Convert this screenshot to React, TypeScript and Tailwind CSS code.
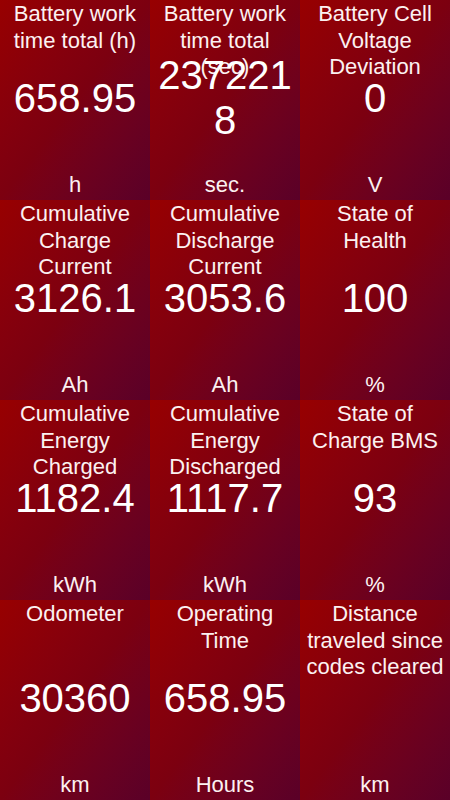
type Metric = {
  title: string;
  value: string;
  unit: string;
};

const metrics: Metric[] = [
  { title: "Battery work time total (h)", value: "658.95", unit: "h" },
  { title: "Battery work time total (sec)", value: "2372218", unit: "sec." },
  { title: "Battery Cell Voltage Deviation", value: "0", unit: "V" },
  { title: "Cumulative Charge Current", value: "3126.1", unit: "Ah" },
  { title: "Cumulative Discharge Current", value: "3053.6", unit: "Ah" },
  { title: "State of Health", value: "100", unit: "%" },
  { title: "Cumulative Energy Charged", value: "1182.4", unit: "kWh" },
  { title: "Cumulative Energy Discharged", value: "1117.7", unit: "kWh" },
  { title: "State of Charge BMS", value: "93", unit: "%" },
  { title: "Odometer", value: "30360", unit: "km" },
  { title: "Operating Time", value: "658.95", unit: "Hours" },
  { title: "Distance traveled since codes cleared", value: "", unit: "km" },
];

const Tile: React.FC<Metric> = ({ title, value, unit }) => {
  return (
    <div className="grid h-[200px] overflow-hidden bg-gradient-to-br from-[#980000] via-[#7c0010] to-[#5a0028] px-[6px] text-center text-[#fcf1f1]">
      <div className="col-start-1 row-start-1 self-start pt-[1px] text-[22px] leading-[26.5px]">
        {title}
      </div>
      <div className="col-start-1 row-start-1 self-center break-all pb-[4px] text-[40px] leading-[45px] text-white">
        {value}
      </div>
      <div className="col-start-1 row-start-1 self-end pb-[2px] text-[22px] leading-[26.5px]">
        {unit}
      </div>
    </div>
  );
};

export default function App() {
  return (
    <div className="grid h-[800px] w-[450px] grid-cols-3 font-['Liberation_Sans',Arial,sans-serif]">
      {metrics.map((m, i) => (
        <Tile key={i} {...m} />
      ))}
    </div>
  );
}
